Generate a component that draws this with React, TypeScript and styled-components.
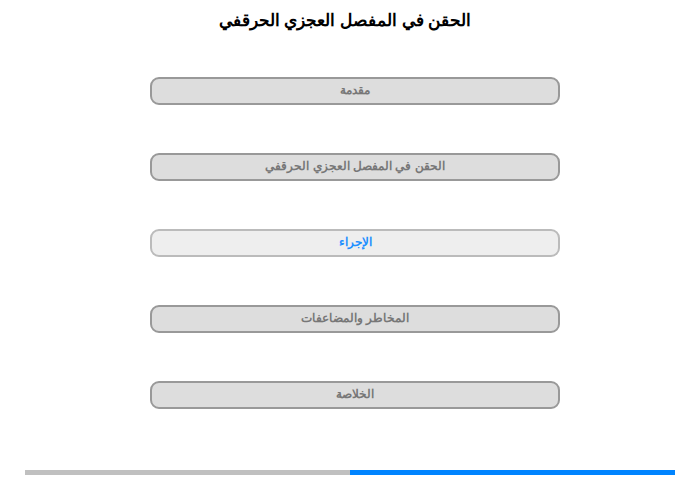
import React from "react";
import styled, { createGlobalStyle } from "styled-components";

const Global = createGlobalStyle`
  html, body { margin: 0; padding: 0; background: #fff; }
  body { font-family: "Liberation Sans", Arial, sans-serif; }
`;

const Page = styled.div`
  width: 700px;
  height: 480px;
  direction: rtl;
  display: flex;
  flex-direction: column;
  align-items: center;
  box-sizing: border-box;
  padding-top: 9px;
`;

const Title = styled.h1`
  margin: 0 10px 0 0;
  font-size: 17px;
  font-weight: bold;
  color: #000;
  line-height: 24px;
  text-align: center;
`;

const Menu = styled.nav`
  display: flex;
  flex-direction: column;
  gap: 48px;
  margin-top: 44px;
  margin-left: 10px;
`;

const Item = styled.div<{ $active?: boolean }>`
  width: 410px;
  height: 28px;
  box-sizing: border-box;
  padding-bottom: 3px;
  border: 2px solid ${(p) => (p.$active ? "#bbbbbb" : "#999999")};
  background: ${(p) => (p.$active ? "#eeeeee" : "#dddddd")};
  color: ${(p) => (p.$active ? "#1e90ff" : "#777777")};
  border-radius: 9px;
  display: flex;
  align-items: center;
  justify-content: center;
  font-size: 12px;
  font-weight: bold;
`;

const Progress = styled.div`
  margin-top: auto;
  margin-bottom: 5px;
  width: 650px;
  height: 5px;
  background: #c0c0c0;
  display: flex;
`;

const Fill = styled.div`
  height: 100%;
  background: #0084ff;
`;

const items = [
  "مقدمة",
  "الحقن في المفصل العجزي الحرقفي",
  "الإجراء",
  "المخاطر والمضاعفات",
  "الخلاصة",
];

export default function App() {
  const active = 2;
  const progress = 50;
  return (
    <>
      <Global />
      <Page>
        <Title>الحقن في المفصل العجزي الحرقفي</Title>
        <Menu>
          {items.map((t, i) => (
            <Item key={t} $active={i === active}>
              {t}
            </Item>
          ))}
        </Menu>
        <Progress>
          <Fill style={{ width: `${progress}%` }} />
        </Progress>
      </Page>
    </>
  );
}
